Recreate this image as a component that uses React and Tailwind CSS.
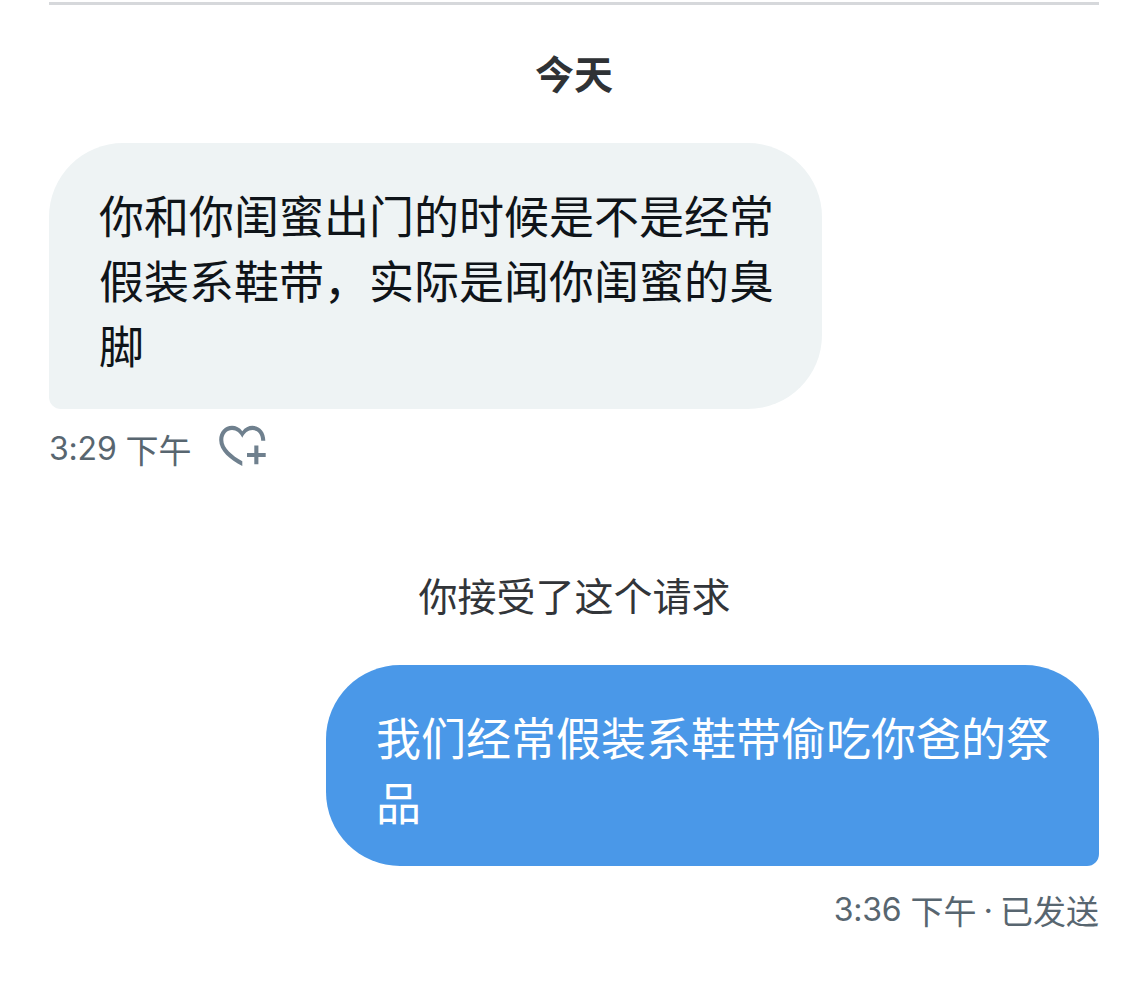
const FONT = "font-['Noto_Sans_CJK_SC',sans-serif]";

function HeartPlusIcon() {
  return (
    <svg viewBox="0 0 48 42" className="h-[42px] w-12 shrink-0 fill-[#6f808e]">
      <path d="M24.300 41C12 34.500 1.200 26 1.200 15C1.200 6.500 7 .8 14 .8C18 .8 21.800 2.800 24.300 6.200C26.800 2.800 30.500 .8 34.500 .8C41.500 .8 47.300 6.500 47.300 15.700H43.200C43.200 9 39.500 5 34.500 5C30 5 26.500 8 24.300 12.800C22 8 18.500 5 14 5C9 5 5.300 9 5.300 15C5.300 23 14 30.500 24.300 36.300Z" />
      <path d="M36.300 20.500H40.400V27.900H47.700V32H40.400V39.200H36.300V32H29V27.900H36.300Z" />
    </svg>
  );
}

// clock digits sit tighter to the day period than a full space
function Time({ value }) {
  return (
    <span className="mr-[9px] font-['Inter',sans-serif] text-[32px] tracking-[-0.2px]">{value}</span>
  );
}

export default function App() {
  return (
    <main className={`h-[1005px] w-[1148px] overflow-hidden bg-white px-[49px] pt-[2px] ${FONT}`} lang="zh-CN">
      <div className="h-[3px] bg-[#d6d8db]" />
      <h1 className="mt-[38px] text-center text-[39px] leading-[58px] font-bold text-[#2f3235]">今天</h1>

      {/* incoming message */}
      <section className="mt-[42px]">
        <div className="h-[266px] w-[773px] rounded-[74px] rounded-bl-[12px] bg-[#eef3f4] pt-[39px] pl-[50px] text-[45px] leading-[65px] text-[#0f1419]">
          <p>你和你闺蜜出门的时候是不是经常</p>
          <p>假装系鞋带，实际是闻你闺蜜的臭</p>
          <p>脚</p>
        </div>
        <div className="mt-4 flex h-[42px] items-start gap-[26px] text-[33px] leading-[48px] text-[#586670]">
          <span className="flex"><Time value="3:29" />下午</span>
          <HeartPlusIcon />
        </div>
      </section>

      <p className="mt-[98px] pl-px text-center text-[39px] leading-[58px] text-[#323539]">你接受了这个请求</p>

      {/* outgoing message */}
      <section className="mt-[42px] flex flex-col items-end">
        <div className="h-[201px] w-[773px] rounded-[74px] rounded-br-[12px] bg-[#4a98e8] pt-[39px] pl-[50px] text-[45px] leading-[65px] text-white">
          <p>我们经常假装系鞋带偷吃你爸的祭</p>
          <p>品</p>
        </div>
        <div className="mt-[19px] flex text-[33px] leading-[50px] text-[#586670]">
          <Time value="3:36" />下午
          <span className="mx-[7px] font-['Inter',sans-serif]">·</span>
          已发送
        </div>
      </section>
    </main>
  );
}
